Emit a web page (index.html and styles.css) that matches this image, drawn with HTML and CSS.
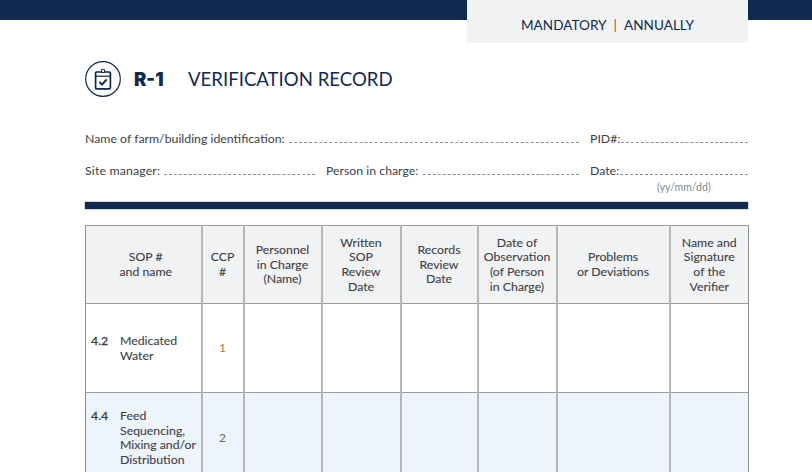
FILE: index.html
```html
<!DOCTYPE html>
<html lang="en">
<head>
<meta charset="utf-8">
<title>R-1 Verification Record</title>
<link rel="stylesheet" href="styles.css">
</head>
<body>
<header class="topbar">
  <div class="tab"><span>MANDATORY</span><span class="pipe">|</span><span>ANNUALLY</span></div>
</header>
<main class="page">
  <div class="title">
    <svg class="icon" width="36" height="36" viewBox="0 0 36 36" fill="none" stroke="#12294f" aria-hidden="true">
      <circle cx="18" cy="18" r="17.3" stroke-width="1.2"/>
      <rect x="10.6" y="11" width="14.8" height="16.8" rx="1" stroke-width="1.7"/>
      <path d="M10.6 15.2H25.4" stroke-width="1.2"/>
      <circle cx="18" cy="10" r="1.7" fill="#fff" stroke-width="1.1"/>
      <path d="M14.4 21l2.6 2.7 4.6-5.2" stroke-width="1.9"/>
    </svg>
    <strong class="code">R-1</strong>
    <h1 class="name">VERIFICATION RECORD</h1>
  </div>
  <div class="form">
    <div class="line">
      <div class="field f-name"><span>Name of farm/building identification:</span><i></i></div>
      <div class="field f-pid"><span>PID#:</span><i></i></div>
    </div>
    <div class="line">
      <div class="field f-site"><span>Site manager:</span><i></i></div>
      <div class="field f-person"><span>Person in charge:</span><i></i></div>
      <div class="field f-pid"><span>Date:</span><i></i></div>
    </div>
    <div class="hint">(yy/mm/dd)</div>
  </div>
  <div class="rule"></div>
  <table class="grid">
    <colgroup>
      <col class="c1"><col class="c2"><col class="c3"><col class="c4"><col class="c5"><col class="c6"><col class="c7"><col class="c8">
    </colgroup>
    <thead>
      <tr>
        <th class="first">SOP #<br>and name</th>
        <th>CCP<br>#</th>
        <th>Personnel<br>in Charge<br>(Name)</th>
        <th>Written<br>SOP<br>Review<br>Date</th>
        <th>Records<br>Review<br>Date</th>
        <th>Date of<br>Observation<br>(of Person<br>in Charge)</th>
        <th>Problems<br>or Deviations</th>
        <th>Name and<br>Signature<br>of the<br>Verifier</th>
      </tr>
    </thead>
    <tbody>
      <tr class="r1">
        <td class="sop"><div class="sopin"><b>4.2</b><span>Medicated<br>Water</span></div></td>
        <td class="ccp">1</td><td></td><td></td><td></td><td></td><td></td><td></td>
      </tr>
      <tr class="r2">
        <td class="sop"><div class="sopin"><b>4.4</b><span>Feed<br>Sequencing,<br>Mixing and/or<br>Distribution</span></div></td>
        <td class="ccp">2</td><td></td><td></td><td></td><td></td><td></td><td></td>
      </tr>
    </tbody>
  </table>
</main>
</body>
</html>
```
FILE: styles.css
```css
* { box-sizing: border-box; }
html, body { margin: 0; height: 472px; overflow: hidden; background: #fff; }
body { font-family: Lato, "Open Sans", sans-serif; color: #3a3f4a; }

.topbar { height: 20px; background: #12294f; padding-left: 467px; }
.tab {
  width: 281px; height: 43px; background: #f1f2f4; color: #12294f;
  display: flex; justify-content: center; align-items: flex-end; gap: 7px;
  padding: 0 0 9px; font-size: 13.6px; line-height: 17px;
}
.pipe { color: #8a5a3a; }

.page { padding: 0 64px 0 85px; }
.title { display: flex; align-items: center; height: 36px; margin-top: 41px; color: #12294f; }
.icon { flex: none; }
.code { font-family: Inter, sans-serif; font-weight: 900; font-size: 18.5px; line-height: 34px; margin: 0 0 1px 13px; width: 54px; }
.name { margin: 0 0 1px; font-weight: 400; font-size: 18.6px; white-space: nowrap; font-family: Lato, sans-serif; }

.form { margin-top: 34px; font-size: 12.3px; line-height: 16px; height: 72px; color: #3d3f45; }
.line { display: flex; height: 16px; margin-bottom: 16px; gap: 11px; }
.field { display: flex; min-width: 0; }
.field span { white-space: nowrap; }
.field i { flex: 1; border-bottom: 1px dashed #8d9096; height: 12px; margin-left: 4px; }
.f-name { width: 494px; }
.f-pid { flex: 1; }
.f-pid i { margin-left: 1px; }
.f-site { width: 230px; }
.f-site span { letter-spacing: .16px; }
.f-person { width: 253px; }
.f-person i { margin-left: 5px; }
.hint { margin-top: -15px; padding-left: 572px; font-size: 10.5px; line-height: 14px; color: #85878c; }

.rule { height: 7px; background: #12294f; margin-top: -1px; box-shadow: 0 0 0 .5px #aab2c4; }

.grid {
  table-layout: fixed; border-collapse: collapse; width: 663px; margin-top: 16px;
  font-size: 12.3px; line-height: 14.7px; color: #3d3f45;
}
.c1 { width: 116px; } .c2 { width: 42px; } .c3 { width: 78px; } .c4 { width: 79px; }
.c5 { width: 77px; } .c6 { width: 79px; } .c7 { width: 113px; } .c8 { width: 79px; }
th, td { border: 1px solid #9a9d9f; border-left: 2px solid #b3b5b6; border-right: 2px solid #b3b5b6; padding: 0; }
th:first-child, td:first-child { border-left: 1px solid #8e9092; }
th:last-child, td:last-child { border-right: 1px solid #8e9092; }
th { height: 78px; background: #f1f2f4; font-weight: 400; text-align: center; vertical-align: middle; padding-top: 1px; -webkit-text-stroke: .1px #3d3f45; }
.first { padding-left: 5px; }
.r1 td { height: 89px; }
.r2 td { height: 100px; background: #edf4fb; }
.sop { vertical-align: top; font-weight: 400; }
.sopin { display: flex; padding: 30px 4px 0 5px; -webkit-text-stroke: .1px #3d3f45; }
.r1 .sopin { padding-top: 30px; }
.r2 .sopin { padding-top: 16px; }
.sopin b { width: 29px; flex: none; font-weight: 400; -webkit-text-stroke: .3px #3d3f45; }
.ccp { text-align: center; color: #9a7d4e; font-size: 12px; }
.r2 .ccp { color: #6a6862; vertical-align: top; padding-top: 38px; }
```
